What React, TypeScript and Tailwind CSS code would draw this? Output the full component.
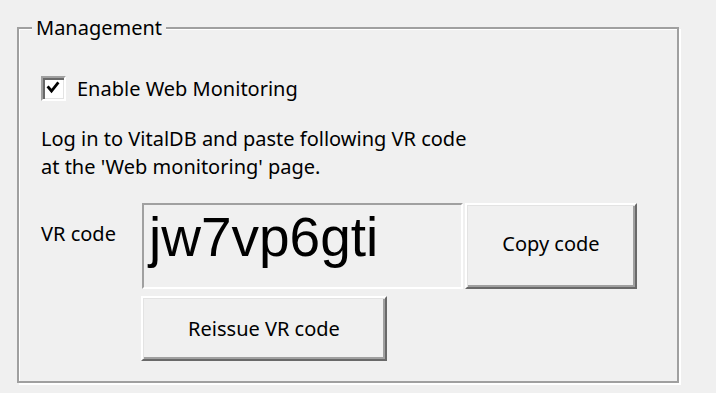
import React from 'react';

// Classic Windows-style raised button
function Button({ label, className }: { label: string; className: string }) {
  return (
    <button
      className={`flex items-center justify-center border-2 border-t-white border-l-white border-b-[#696969] border-r-[#696969] bg-[#f0f0f0] shadow-[inset_1px_1px_0_#e3e3e3,inset_-2px_-2px_0_#a0a0a0] text-black text-[20px] leading-[24px] ${className}`}
    >
      {label}
    </button>
  );
}

function Checkbox() {
  return (
    <div className="w-[25px] h-[25px] border-2 border-t-[#a0a0a0] border-l-[#a0a0a0] border-b-white border-r-white">
      <div className="w-full h-full bg-white shadow-[inset_2px_2px_0_#696969,inset_-1px_-1px_0_#e3e3e3] flex items-center justify-center">
        <svg width="21" height="21" viewBox="0 0 21 21">
          <polyline points="5.5,9.5 8.5,13 14.5,5.5" fill="none" stroke="#000" strokeWidth="2.8" strokeLinecap="square" />
        </svg>
      </div>
    </div>
  );
}

export default function App() {
  return (
    <div className="w-[716px] h-[393px] bg-[#f0f0f0] pl-[17px] pt-[16px] font-['Noto_Sans',sans-serif] text-black">
      <fieldset className="w-[662px] border-2 border-[#a0a0a0] shadow-[inset_1px_1px_0_#fff,2px_2px_0_#fff]">
        <legend className="ml-[13px] px-[4px] bg-[#f0f0f0] text-[20px] leading-[24px]">Management</legend>

        <div className="pl-[22px] pb-[20px]">
          {/* Enable checkbox */}
          <div className="mt-[35px] flex items-center gap-[11px]">
            <Checkbox />
            <span className="text-[20px] leading-[25px] pt-[1px]">Enable Web Monitoring</span>
          </div>

          {/* Instructions */}
          <p className="mt-[24px] text-[20px] leading-[27.5px]">
            Log in to VitalDB and paste following VR code
            <br />
            at the 'Web monitoring' page.
          </p>

          {/* VR code row */}
          <div className="mt-[23px] flex">
            <div className="w-[101px] pt-[19px] text-[20px] leading-[24px]">VR code</div>
            <div className="w-[321px] h-[86px] border-2 border-t-[#a0a0a0] border-l-[#a0a0a0] border-b-white border-r-white pl-[5px] pt-[5px] font-['Liberation_Sans',Arial,sans-serif] text-[55px] leading-none">
              jw7vp6gti
            </div>
            <Button label="Copy code" className="ml-[2px] w-[172px] h-[86px] pb-[4px]" />
          </div>

          <Button label="Reissue VR code" className="mt-[7px] ml-[100px] w-[246px] h-[65px]" />
        </div>
      </fieldset>
    </div>
  );
}
